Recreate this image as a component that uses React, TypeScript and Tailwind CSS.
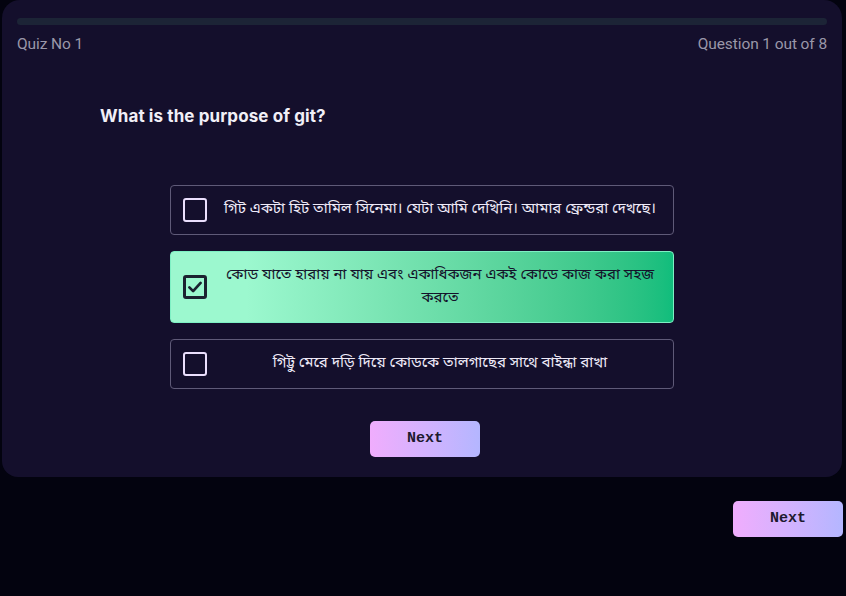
import { useState } from "react";

const options = [
  "গিট একটা হিট তামিল সিনেমা। যেটা আমি দেখিনি। আমার ফ্রেন্ডরা দেখছে।",
  "কোড যাতে হারায় না যায় এবং একাধিকজন একই কোডে কাজ করা সহজ করতে",
  "গিট্টু মেরে দড়ি দিয়ে কোডকে তালগাছের সাথে বাইন্ধা রাখা",
];

function Check() {
  return (
    <svg viewBox="0 0 24 24" className="h-[18px] w-[18px]" fill="none" stroke="currentColor" strokeWidth={3.6} strokeLinecap="round" strokeLinejoin="round">
      <path d="M4.5 12.5l5 5L19.5 6.5" />
    </svg>
  );
}

export default function App() {
  const [picked, setPicked] = useState(1);

  return (
    <div className="min-h-[596px] bg-[#03030f] pl-[2px] pr-[4px] pb-8 font-['Inter',sans-serif]">
      <div className="rounded-b-[16px] rounded-t-[18px] bg-[#140f2c] px-[15px] pb-5 pt-[18px]">
        <div className="h-[7px] rounded-full bg-[#1c2436]" />
        <div className="mt-[8px] flex justify-between font-['Roboto',sans-serif] text-[15.5px] tracking-[-0.1px] text-[#9a97a9]">
          <span>Quiz No 1</span>
          <span>Question 1 out of 8</span>
        </div>

        <div className="mx-auto mt-[48px] w-[644px]">
          <h1 className="text-[17px] font-bold tracking-[0.1px] text-[#f1eff7]">What is the purpose of git?</h1>
        </div>

        <div className="mx-auto mt-[55px] flex w-[504px] flex-col gap-4 font-['Noto_Sans_Bengali','Noto_Sans',sans-serif] text-[15px] leading-[23px]">
          {options.map((o, i) => {
            const on = picked === i;
            return (
              <button
                key={i}
                onClick={() => setPicked(i)}
                className={
                  on
                    ? "flex min-h-[50px] items-center gap-3 rounded-[4px] border border-[#7ef0c4] bg-gradient-to-r from-[#9cf8cf] from-15% to-[#10bd7c] px-3 py-3 text-[#14122a]"
                    : "flex min-h-[50px] items-center gap-3 rounded-[4px] border border-[#5f5a78] px-3 py-3 text-[#efeaf8]"
                }
              >
                <span
                  className={
                    on
                      ? "flex h-6 w-6 shrink-0 items-center justify-center rounded-[3px] border-[3px] border-[#1b2230] text-[#1b2230]"
                      : "h-6 w-6 shrink-0 rounded-[3px] border-2 border-[#ebdffd]"
                  }
                >
                  {on && <Check />}
                </span>
                <span className="flex-1 text-center">{o}</span>
              </button>
            );
          })}
        </div>

        <div className="mt-[32px] flex justify-center">
          <button className="ml-[6px] h-[36px] w-[110px] rounded-[5px] bg-gradient-to-r from-[#f0adfd] to-[#b4b6ff] font-['Liberation_Mono',monospace] text-[15px] font-bold text-[#1d1a2e]">
            Next
          </button>
        </div>
      </div>

      <div className="-mr-px mt-[24px] flex justify-end">
        <button className="h-[36px] w-[110px] rounded-[5px] bg-gradient-to-r from-[#f0adfd] to-[#b4b6ff] font-['Liberation_Mono',monospace] text-[15px] font-bold text-[#1d1a2e]">
          Next
        </button>
      </div>
    </div>
  );
}
